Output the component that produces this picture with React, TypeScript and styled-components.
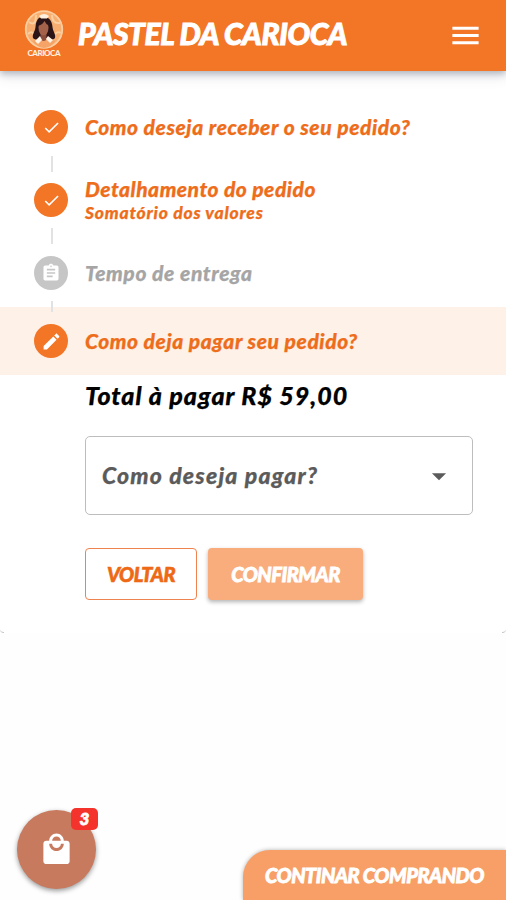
import React from 'react';
import styled, { createGlobalStyle } from 'styled-components';

const ORANGE = '#f37526';

const GlobalStyle = createGlobalStyle`
  * { box-sizing: border-box; }
  body {
    margin: 0;
    background: #fefefe;
    font-family: Lato, "Open Sans", sans-serif;
    font-weight: 900;
    font-style: italic;
  }
  button { font: inherit; }
`;

const Page = styled.div`
  position: relative;
  height: 900px;
  overflow: hidden;
`;

const Header = styled.header`
  position: relative;
  z-index: 1;
  display: flex;
  align-items: flex-start;
  height: 71px;
  padding: 0 23px 0 24px;
  background: ${ORANGE};
  box-shadow: 0 3px 6px rgba(70, 80, 100, 0.3), 0 5px 12px rgba(70, 80, 100, 0.17);
`;

const Logo = styled.svg`
  width: 40px;
  height: 50px;
  margin-top: 9px;
`;

const Text = styled.span<{ $size: number; $spacing?: number; $color?: string; $stroke?: number }>`
  font-size: ${(p) => p.$size}px;
  letter-spacing: ${(p) => p.$spacing ?? 0}px;
  color: ${(p) => p.$color ?? 'inherit'};
  line-height: 1.2;
  white-space: nowrap;
  -webkit-text-stroke: ${(p) => p.$stroke ?? 0.25}px currentColor;
`;

const Brand = styled.h1`
  display: flex;
  flex: 1;
  margin: 15px 0 0 14px;
  color: #fff;
  font-weight: 900;
`;

const MenuButton = styled.button`
  display: flex;
  margin: 18px 0 0;
  padding: 0;
  border: 0;
  background: none;
  color: #fff;
`;

const Icon = styled.svg<{ $size: number }>`
  display: block;
  width: ${(p) => p.$size}px;
  height: ${(p) => p.$size}px;
  fill: currentColor;
`;

const Card = styled.main`
  position: relative;
  height: 562px;
  padding-top: 22px;
  background: #fff;

  &::before,
  &::after {
    content: '';
    position: absolute;
    bottom: 0;
    width: 4px;
    height: 3px;
    border-bottom: 1px solid #c4c4c4;
  }
  &::before {
    left: 0;
    border-bottom-left-radius: 4px;
  }
  &::after {
    right: 0;
    border-bottom-right-radius: 4px;
  }
`;

const Step = styled.div<{ $active?: boolean }>`
  display: flex;
  align-items: center;
  gap: 17px;
  height: 68px;
  padding-left: 34px;
  background: ${(p) => (p.$active ? '#fdf1e8' : 'transparent')};
`;

const StepDot = styled.span<{ $disabled?: boolean }>`
  display: flex;
  align-items: center;
  justify-content: center;
  width: 34px;
  height: 34px;
  border-radius: 50%;
  color: #fff;
  background: ${(p) => (p.$disabled ? '#c6c6c6' : ORANGE)};
`;

const StepLabel = styled.div<{ $disabled?: boolean }>`
  display: flex;
  flex-direction: column;
  margin-top: -1px;
  color: ${(p) => (p.$disabled ? '#a5a5a5' : '#ee6d1b')};
`;

const Connector = styled.div<{ $height: number; $top: number; $bottom: number }>`
  position: relative;
  width: 2px;
  height: ${(p) => p.$height}px;
  margin: ${(p) => p.$top}px 0 ${(p) => p.$bottom}px 51px;
  background: #e2e2e2;
`;

const Content = styled.section`
  display: flex;
  flex-direction: column;
  padding: 5px 33px 0 85px;
`;

const Select = styled.div`
  display: flex;
  align-items: center;
  justify-content: space-between;
  height: 79px;
  margin-top: 26px;
  padding: 0 16px;
  border: 1px solid #bdbdbd;
  border-radius: 5px;
  color: #5b5b5b;
`;

const Actions = styled.div`
  display: flex;
  gap: 11px;
  margin-top: 33px;
`;

const Button = styled.button<{ $filled?: boolean }>`
  display: flex;
  align-items: center;
  justify-content: center;
  width: ${(p) => (p.$filled ? 155 : 112)}px;
  height: 52px;
  padding: 0;
  border: ${(p) => (p.$filled ? '0' : '1px solid #ef8350')};
  border-radius: 4px;
  color: ${(p) => (p.$filled ? '#fff' : '#ee6915')};
  background: ${(p) => (p.$filled ? '#f9ac7c' : '#fff')};
  box-shadow: ${(p) => (p.$filled ? '0 2px 4px rgba(0, 0, 0, 0.3)' : 'none')};
`;

const CartButton = styled.button`
  position: absolute;
  left: 17px;
  top: 810px;
  display: flex;
  align-items: center;
  justify-content: center;
  width: 79px;
  height: 79px;
  padding: 0;
  border: 0;
  border-radius: 50%;
  color: #fff;
  background: #c77a5e;
  box-shadow: 0 2px 5px rgba(0, 0, 0, 0.4);
`;

const Badge = styled.span`
  position: absolute;
  top: -2px;
  right: -2px;
  display: flex;
  align-items: center;
  justify-content: center;
  width: 27px;
  height: 22px;
  border-radius: 5px;
  background: #f4342c;
`;

const ContinueButton = styled.button`
  position: absolute;
  right: 0;
  bottom: 0;
  display: flex;
  width: 263px;
  height: 50px;
  padding: 13px 0 0 22px;
  border: 0;
  border-radius: 27px 0 0 0;
  color: #fff;
  background: #f79f66;
  box-shadow: 0 0 4px rgba(0, 0, 0, 0.3);
`;

const paths = {
  check: 'M9 16.17 4.83 12l-1.42 1.41L9 19 21 7l-1.41-1.41z',
  clipboard:
    'M19 3h-4.18C14.4 1.84 13.3 1 12 1c-1.3 0-2.4.84-2.82 2H5c-1.1 0-2 .9-2 2v14c0 1.1.9 2 2 2h14c1.1 0 2-.9 2-2V5c0-1.1-.9-2-2-2zm-7 0c.55 0 1 .45 1 1s-.45 1-1 1-1-.45-1-1 .45-1 1-1zm2 14H7v-2h7v2zm3-4H7v-2h10v2zm0-4H7V7h10v2z',
  pencil:
    'M3 17.25V21h3.75L17.81 9.94l-3.75-3.75L3 17.25zM20.71 7.04c.39-.39.39-1.02 0-1.41l-2.34-2.34c-.39-.39-1.02-.39-1.41 0l-1.83 1.83 3.75 3.75 1.83-1.83z',
  bag: 'M19 6h-2c0-2.76-2.24-5-5-5S7 3.24 7 6H5c-1.1 0-1.99.9-1.99 2L3 20c0 1.1.9 2 2 2h14c1.1 0 2-.9 2-2V8c0-1.1-.9-2-2-2zm-7-3c1.66 0 3 1.34 3 3H9c0-1.66 1.34-3 3-3zm0 10c-2.76 0-5-2.24-5-5h2c0 1.66 1.34 3 3 3s3-1.34 3-3h2c0 2.76-2.24 5-5 5z',
  menu: 'M3 18h18v-2H3v2zm0-5h18v-2H3v2zm0-7v2h18V6H3z',
  arrow: 'M7 10l5 5 5-5z',
};

function Glyph({ name, size }: { name: keyof typeof paths; size: number }) {
  return (
    <Icon $size={size} viewBox="0 0 24 24" aria-hidden="true">
      <path d={paths[name]} />
    </Icon>
  );
}

function BrandLogo() {
  return (
    <Logo viewBox="0 0 40 50" aria-label="Pastel da Carioca">
      <circle cx="20" cy="20.5" r="19.2" fill="#f7ae70" />
      <circle cx="20" cy="20.5" r="18.2" fill="none" stroke="#fbcfa2" strokeWidth="1.6" />
      <path d="M5 13q7 5 7-7M28 6q0 9 8 8M4 25q4-4 6 1M31 25q3-3 6-1" fill="none" stroke="#f9cf9f" strokeWidth="2" />
      <path d="M19 8c-6 0-7 5-7.500 10-.5 5-3.500 7-2.500 11 2 2 6 2 9 0h4c3 2 7 2 9 0 1-4-2-6-2.500-11-.5-6-3-10-9.500-10z" fill="#2b1417" />
      <path d="M16.500 24h6v8h-6z" fill="#8c4d3b" />
      <ellipse cx="19.500" cy="18.500" rx="5" ry="8" fill="#a5624b" />
      <path d="M13.500 17q0-7 6-7.500 5 .5 6 7.500-4-2-5-5-2 4-7 5z" fill="#2b1417" />
      <path d="M9 32l7-2q4 4 7 0l8 2q-3 6-11 7-8-1-11-7z" fill="#f5a367" />
      <path d="M11 32l5-5 2 4-4 4zM29 31l-5-4-2 3 4 4z" fill="#fff3e8" />
      <path d="M15 7q5-4 10 0l-2 2.500h-6z" fill="#fff0df" />
      <text x="3.500" y="47" fill="#fff1df" fontFamily="Lato, sans-serif" fontStyle="normal" fontSize="8" fontWeight="900" textLength="33">CARIOCA</text>
    </Logo>
  );
}

export default function App() {
  return (
    <Page>
      <GlobalStyle />
      <Header>
        <BrandLogo />
        <Brand>
          <Text $size={30} $spacing={-0.42} $stroke={1}>PASTEL DA CARIOCA</Text>
        </Brand>
        <MenuButton aria-label="Menu">
          <Glyph name="menu" size={35} />
        </MenuButton>
      </Header>
      <Card>
        <Step>
          <StepDot><Glyph name="check" size={19} /></StepDot>
          <StepLabel><Text $size={21} $spacing={0.55}>Como deseja receber o seu pedido?</Text></StepLabel>
        </Step>
        <Connector $height={16} $top={-5} $bottom={-6} />
        <Step>
          <StepDot><Glyph name="check" size={19} /></StepDot>
          <StepLabel>
            <Text $size={21} $spacing={0.48}>Detalhamento do pedido</Text>
            <Text $size={17.5} $spacing={0.77}>Somatório dos valores</Text>
          </StepLabel>
        </Step>
        <Connector $height={16} $top={-6} $bottom={-5} />
        <Step>
          <StepDot $disabled><Glyph name="clipboard" size={20} /></StepDot>
          <StepLabel $disabled><Text $size={21} $spacing={0.6}>Tempo de entrega</Text></StepLabel>
        </Step>
        <Connector $height={11} $top={-6} $bottom={-5} />
        <Step $active>
          <StepDot><Glyph name="pencil" size={21} /></StepDot>
          <StepLabel><Text $size={21} $spacing={0.55}>Como deja pagar seu pedido?</Text></StepLabel>
        </Step>
        <Content>
          <Text $size={25} $spacing={1} $color="#000">Total à pagar R$ 59,00</Text>
          <Select role="combobox" aria-expanded="false">
            <Text $size={23} $spacing={1.2}>Como deseja pagar?</Text>
            <Glyph name="arrow" size={34} />
          </Select>
          <Actions>
            <Button><Text $size={20} $spacing={-0.5} $stroke={0.6}>VOLTAR</Text></Button>
            <Button $filled><Text $size={20} $spacing={-0.5} $stroke={0.8}>CONFIRMAR</Text></Button>
          </Actions>
        </Content>
      </Card>
      <CartButton aria-label="Carrinho">
        <Glyph name="bag" size={35} />
        <Badge><Text $size={17} $stroke={0.8}>3</Text></Badge>
      </CartButton>
      <ContinueButton><Text $size={20} $spacing={-0.52} $stroke={0.8}>CONTINAR COMPRANDO</Text></ContinueButton>
    </Page>
  );
}
